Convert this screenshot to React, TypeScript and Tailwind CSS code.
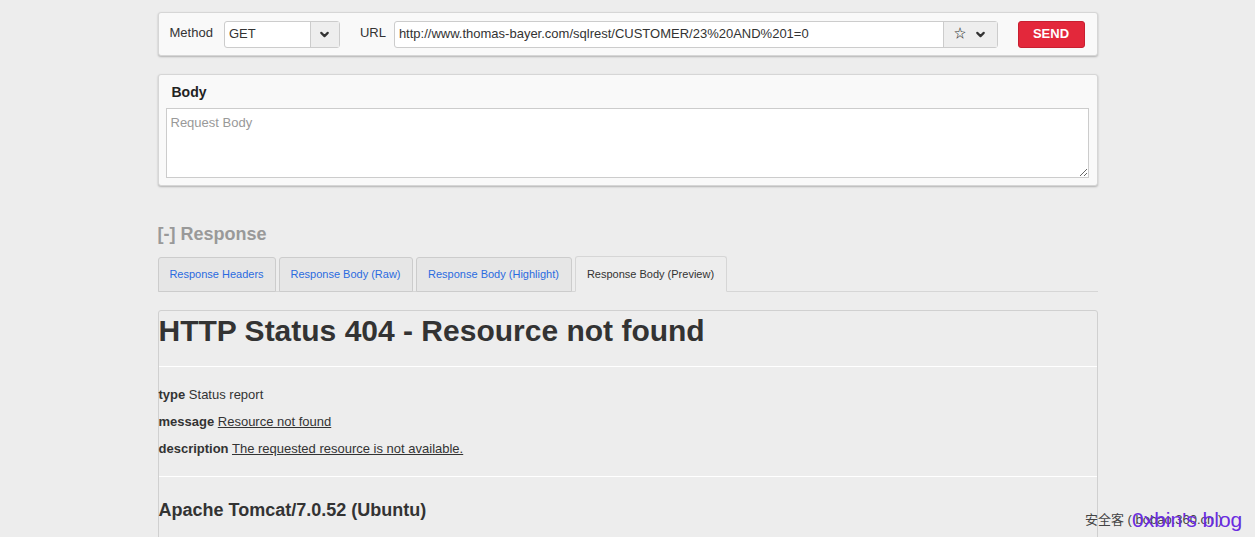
import { ChevronDown } from "lucide-react";

export default function App() {
  return (
    <div
      className="min-h-[537px] bg-[#ededed] text-[#333] overflow-hidden relative"
      style={{ fontFamily: '"Liberation Sans", Arial, "Noto Sans CJK SC", sans-serif' }}
    >
      <div className="w-[940px] mx-auto pt-3">
        {/* request bar */}
        <div className="h-[44px] bg-[#f9f9f9] border border-[#d6d6d6] rounded-[3px] shadow-[0_1px_2px_rgba(0,0,0,0.25)] flex items-center pl-[11px] pr-[12px]">
          <span className="text-[13px] mr-[11px] -mt-[3px]">Method</span>
          <div className="flex h-[27px] w-[116px] border border-[#ccc] rounded-[3px] bg-white">
            <div className="flex-1 flex items-center pl-[4px] text-[13px]">GET</div>
            <div className="w-[29px] border-l border-[#ccc] bg-[#eee] flex items-center justify-center">
              <ChevronDown size={13} strokeWidth={4} className="text-[#333]" />
            </div>
          </div>
          <span className="text-[13px] ml-[20px] mr-[8px] -mt-[3px]">URL</span>
          <div className="flex h-[27px] w-[604px] border border-[#ccc] rounded-[3px] bg-white">
            <div className="flex-1 flex items-center pl-[4px] text-[13px]">
              http://www.thomas-bayer.com/sqlrest/CUSTOMER/23%20AND%201=0
            </div>
            <div className="w-[54px] border-l border-[#ccc] bg-[#eee] flex items-center justify-center gap-[8px]">
              <span className="text-[12px] leading-none font-bold">☆</span>
              <ChevronDown size={13} strokeWidth={4} className="text-[#333]" />
            </div>
          </div>
          <button className="ml-auto h-[27px] w-[67px] rounded-[3px] bg-[#e3283b] border border-[#c81f30] text-white text-[13px] font-bold">
            SEND
          </button>
        </div>

        {/* body panel */}
        <div className="mt-[18px] bg-[#f9f9f9] border border-[#d6d6d6] rounded-[3px] shadow-[0_1px_2px_rgba(0,0,0,0.25)] px-[7px] pb-[7px]">
          <div className="h-[33px] flex items-center pl-[6px] pt-[1px] text-[14px] font-bold text-[#222]">Body</div>
          <textarea
            placeholder="Request Body"
            className="block w-[923px] h-[70px] border border-[#ccc] bg-white text-[13px] px-[4px] py-[4px] placeholder:text-[#999] outline-none"
          />
        </div>

        {/* response */}
        <div className="mt-[37px] text-[18px] font-bold text-[#999] leading-[22px]">[-] Response</div>
        <div className="mt-[12px] flex items-end gap-[3px] border-b border-[#d6d6d6] h-[35px]">
          <div className="w-[118px] h-[35px] -mb-px border border-[#ccc] rounded-t-[3px] bg-[#e6e6e6] flex items-center justify-center text-[11px] text-[#2a6be0]">
            Response Headers
          </div>
          <div className="w-[134px] h-[35px] -mb-px border border-[#ccc] rounded-t-[3px] bg-[#e6e6e6] flex items-center justify-center text-[11px] text-[#2a6be0]">
            Response Body (Raw)
          </div>
          <div className="w-[156px] h-[35px] -mb-px border border-[#ccc] rounded-t-[3px] bg-[#e6e6e6] flex items-center justify-center text-[11px] text-[#2a6be0]">
            Response Body (Highlight)
          </div>
          <div className="w-[152px] h-[36px] -mb-px border border-[#d6d6d6] border-b-[#ededed] rounded-t-[3px] bg-[#ededed] flex items-center justify-center text-[11px] text-[#333]">
            Response Body (Preview)
          </div>
        </div>

        <div className="mt-[18px] border border-[#d0d0d0] rounded-t-[3px] h-[300px]">
          <h1 className="text-[30px] font-bold leading-[36px] mt-[2px] text-[#333]">HTTP Status 404 - Resource not found</h1>
          <div className="mt-[17px] border-t border-white" />
          <div className="mt-[14px] text-[13px] leading-[27px]">
            <p>
              <b>type</b> Status report
            </p>
            <p>
              <b>message</b> <u>Resource not found</u>
            </p>
            <p>
              <b>description</b> <u>The requested resource is not available.</u>
            </p>
          </div>
          <div className="mt-[14px] border-t border-white" />
          <h3 className="mt-[22px] text-[18px] font-bold leading-[22px] text-[#333]">Apache Tomcat/7.0.52 (Ubuntu)</h3>
        </div>
      </div>

      {/* watermark */}
      <div className="absolute left-[1085px] top-[510px] text-[13px] text-[#444]">安全客 ( bobao.360.cn )</div>
      <div className="absolute left-[1132px] top-[507px] text-[21px] text-[#6a2be0] leading-[26px]">0xbin's blog</div>
    </div>
  );
}
